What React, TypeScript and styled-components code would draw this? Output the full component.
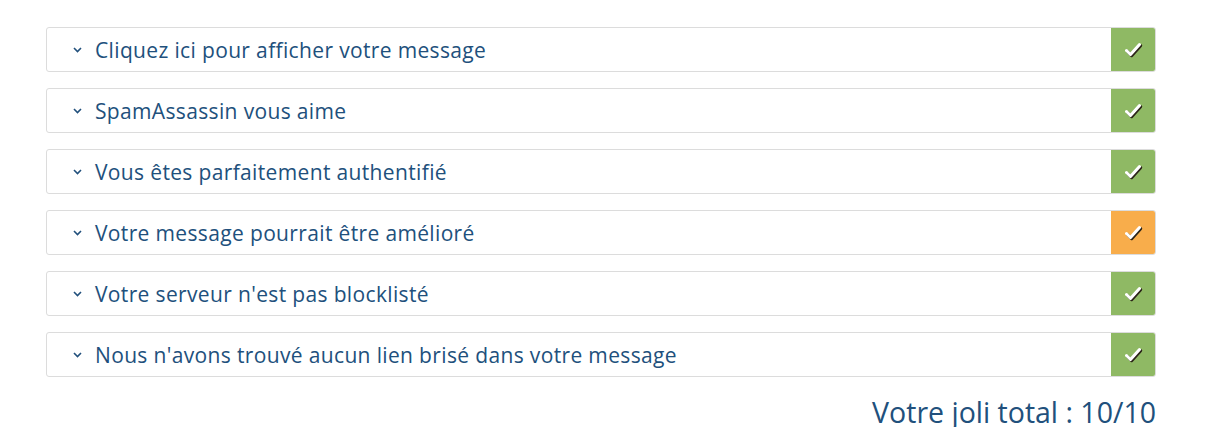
import styled, { createGlobalStyle } from "styled-components";

const GlobalStyle = createGlobalStyle`
  body {
    margin: 0;
    background: #ffffff;
    font-family: "Open Sans", "Noto Sans", sans-serif;
  }
`;

const Page = styled.div`
  width: 1110px;
  padding: 27px 0 0 46px;
  display: flex;
  flex-direction: column;
  gap: 16px;
`;

const Row = styled.div`
  display: flex;
  align-items: stretch;
  height: 45px;
  box-sizing: border-box;
  border: 1px solid #dcdcdc;
  border-radius: 3px;
  overflow: hidden;
`;

const Label = styled.div`
  flex: 1;
  display: flex;
  align-items: center;
  gap: 13px;
  padding-left: 26px;
  font-size: 21px;
  letter-spacing: 0.35px;
  color: #21507c;
`;

const Chevron = styled.svg`
  width: 9px;
  height: 6px;
  margin-top: 1px;
`;

const Status = styled.div<{ $tone: "ok" | "warn" }>`
  width: 44px;
  display: flex;
  align-items: center;
  justify-content: center;
  background: ${(p) => (p.$tone === "ok" ? "#8fb964" : "#f8ad4b")};
`;

const Check = styled.svg`
  width: 18px;
  height: 16px;
  margin-left: 1px;
`;

const Total = styled.div`
  margin-top: 5px;
  text-align: right;
  font-size: 28.5px;
  color: #21507c;
  line-height: 1;
`;

const items: { text: string; tone: "ok" | "warn" }[] = [
  { text: "Cliquez ici pour afficher votre message", tone: "ok" },
  { text: "SpamAssassin vous aime", tone: "ok" },
  { text: "Vous êtes parfaitement authentifié", tone: "ok" },
  { text: "Votre message pourrait être amélioré", tone: "warn" },
  { text: "Votre serveur n'est pas blocklisté", tone: "ok" },
  { text: "Nous n'avons trouvé aucun lien brisé dans votre message", tone: "ok" },
];

const checkPath = "M1.5 8.5 L5.5 12.5 L14.5 2.5";

function App() {
  return (
    <>
      <GlobalStyle />
      <Page>
        {items.map((item) => (
          <Row key={item.text}>
            <Label>
              <Chevron viewBox="0 0 9 6">
                <path d="M1 1l3.5 3.5L8 1" fill="none" stroke="#21507c" strokeWidth="1.6" />
              </Chevron>
              {item.text}
            </Label>
            <Status $tone={item.tone}>
              <Check viewBox="0 0 18 16">
                <path
                  d={checkPath}
                  transform="translate(1.2 1.2)"
                  fill="none"
                  stroke="#2b2418"
                  strokeWidth="3"
                  strokeLinecap="round"
                  strokeLinejoin="round"
                />
                <path
                  d={checkPath}
                  fill="none"
                  stroke="#ffffff"
                  strokeWidth="3"
                  strokeLinecap="round"
                  strokeLinejoin="round"
                />
              </Check>
            </Status>
          </Row>
        ))}
        <Total>Votre joli total : 10/10</Total>
      </Page>
    </>
  );
}

export default App;
